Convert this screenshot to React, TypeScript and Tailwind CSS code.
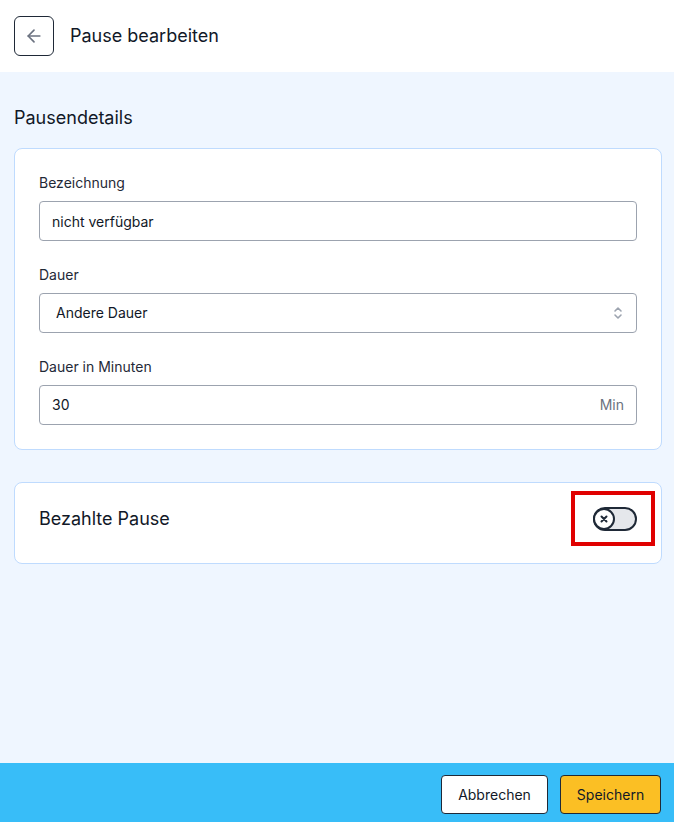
import React, { useState } from "react";

const font = { fontFamily: "Inter, 'Noto Sans', sans-serif" };

const App: React.FC = () => {
  const [name, setName] = useState("nicht verfügbar");
  const [minutes, setMinutes] = useState("30");
  const [paid, setPaid] = useState(false);

  return (
    <div className="flex flex-col h-[822px] bg-[#eff6ff] text-[#111827]" style={font}>
      {/* Kopfzeile */}
      <header className="h-[72px] bg-white flex items-center px-[14px] gap-4 shrink-0">
        <button className="w-10 h-10 rounded-md border border-[#1f2937] flex items-center justify-center">
          <svg width="20" height="20" viewBox="0 0 24 24" fill="none" stroke="#6b7280" strokeWidth="2" strokeLinecap="round" strokeLinejoin="round">
            <path d="M19 12H5" />
            <path d="M12 19l-7-7 7-7" />
          </svg>
        </button>
        <h1 className="text-lg">Pause bearbeiten</h1>
      </header>

      <main className="flex-1 pl-[14px] pr-[12px] pt-[32px]">
        <h2 className="text-lg mb-[16px]">Pausendetails</h2>

        <div className="bg-white border border-[#bfdbfe] rounded-lg px-6 pt-6 pb-6 flex flex-col gap-6">
          <div>
            <label className="block text-sm text-[#1f2937] mb-2">Bezeichnung</label>
            <input
              value={name}
              onChange={(e) => setName(e.target.value)}
              className="w-full h-10 px-3 border border-[#9ca3af] rounded text-sm outline-none"
            />
          </div>
          <div>
            <label className="block text-sm text-[#1f2937] mb-2">Dauer</label>
            <div className="relative">
              <select className="w-full h-10 pl-4 pr-10 border border-[#9ca3af] rounded text-sm appearance-none bg-white outline-none">
                <option>Andere Dauer</option>
                <option>15 Minuten</option>
                <option>30 Minuten</option>
              </select>
              <svg className="pointer-events-none absolute right-[12px] top-[12px]" width="14" height="16" viewBox="0 0 14 16" fill="none" stroke="#9ca3af" strokeWidth="1.6" strokeLinecap="round" strokeLinejoin="round">
                <path d="M4 6l3-3 3 3" />
                <path d="M4 10l3 3 3-3" />
              </svg>
            </div>
          </div>
          <div>
            <label className="block text-sm text-[#1f2937] mb-2">Dauer in Minuten</label>
            <div className="flex items-center h-10 border border-[#9ca3af] rounded px-3">
              <input
                value={minutes}
                onChange={(e) => setMinutes(e.target.value)}
                className="flex-1 text-sm outline-none"
              />
              <span className="text-sm text-[#6b7280]">Min</span>
            </div>
          </div>
        </div>

        <div className="mt-8 bg-white border border-[#bfdbfe] rounded-lg h-[82px] pl-6 pr-[6px] pb-[9px] flex items-center justify-between">
          <span className="text-lg">Bezahlte Pause</span>
          <div className="border-4 border-[#e00000] w-[84px] h-[55px] flex items-center justify-end pr-[14px]">
            <button
              onClick={() => setPaid(!paid)}
              className="w-[44px] h-[24px] rounded-full border-2 border-[#1f2937] bg-gray-200 flex items-center"
            >
              <span className="w-[22px] h-[22px] -ml-[2px] rounded-full border-2 border-[#1f2937] bg-white flex items-center justify-center">
                <svg width="8" height="8" viewBox="0 0 8 8" stroke="#1f2937" strokeWidth="2" strokeLinecap="round">
                  <path d="M1.5 1.5l5 5M6.5 1.5l-5 5" />
                </svg>
              </span>
            </button>
          </div>
        </div>
      </main>

      {/* Fußzeile */}
      <footer className="h-[59px] bg-[#38bdf8] flex items-start justify-end gap-3 pt-[12px] px-[13px] shrink-0">
        <button className="h-[39px] w-[107px] bg-white border border-[#1f2937] rounded text-sm">
          Abbrechen
        </button>
        <button className="h-[39px] w-[101px] bg-[#fbbf24] border border-[#1f2937] rounded text-sm">
          Speichern
        </button>
      </footer>
    </div>
  );
};

export default App;
